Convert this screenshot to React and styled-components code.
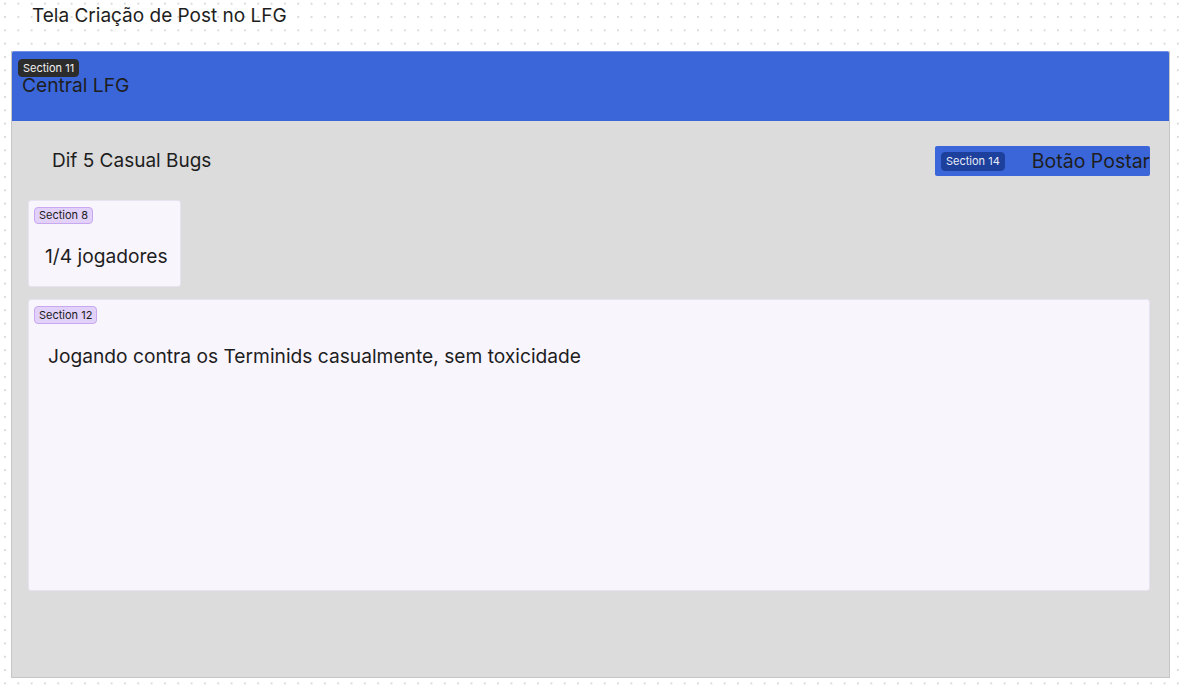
import styled, { createGlobalStyle } from 'styled-components'

const GlobalStyle = createGlobalStyle`
  body {
    margin: 0;
    font-family: Inter, "Noto Sans", sans-serif;
    background-color: #ffffff;
    background-image: radial-gradient(circle, #dadada 0.7px, transparent 1px);
    background-size: 13.33px 13.33px;
    background-position: -1.7px -3px;
  }
`

const Canvas = styled.div`
  width: 1189px;
  height: 695px;
  padding: 0 19px 0 11px;
  box-sizing: border-box;
  display: flex;
  flex-direction: column;
`

const PageTitle = styled.div`
  font-size: 19px;
  color: #1e1e1e;
  height: 32px;
  line-height: 32px;
  padding-left: 21px;
  margin-bottom: 19px;
`

const Frame = styled.div`
  height: 626px;
  background: #dcdcdc;
  border: 1px solid #c6c6c6;
  border-top: none;
  display: flex;
  flex-direction: column;
`

const Header = styled.div`
  position: relative;
  height: 70px;
  background: #3a66d9;
  border-top: 1px solid #6d8fe6;
  border-radius: 2px 2px 0 0;
  padding: 21px 10px 0;
  box-sizing: border-box;
  font-size: 19.2px;
  color: #1e1e1e;
`

const Badge = styled.span`
  display: inline-flex;
  align-items: center;
  height: ${(p) => p.$h || 17}px;
  padding: 0 4px;
  border-radius: 4px;
  font-size: 11px;
  line-height: 1;
  box-sizing: border-box;
  background: ${(p) => p.$bg};
  color: ${(p) => p.$fg};
  border: 1px solid ${(p) => p.$border || p.$bg};
`

const TopBadge = styled(Badge)`
  position: absolute;
  top: 7px;
  left: 6px;
`

const Body = styled.div`
  display: flex;
  flex-direction: column;
  padding: 25px 19px 0 16px;
`

const TopRow = styled.div`
  display: flex;
  align-items: center;
  justify-content: space-between;
  height: 30px;
`

const Subtitle = styled.div`
  font-size: 19px;
  color: #1e1e1e;
  padding-left: 24px;
  margin-top: -2px;
`

const PostButton = styled.div`
  width: 215px;
  height: 30px;
  background: #3a66d9;
  border-radius: 2px;
  display: flex;
  align-items: center;
  padding-left: 6px;
  box-sizing: border-box;
  overflow: hidden;
  white-space: nowrap;
`

const ButtonLabel = styled.span`
  font-size: 19.5px;
  color: #1e1e1e;
  margin-left: 27px;
`

const Card = styled.div`
  display: flex;
  flex-direction: column;
  align-items: flex-start;
  background: #f8f5fd;
  border: 1px solid #e8e3f0;
  border-radius: 3px;
  box-sizing: border-box;
  width: ${(p) => p.$w || 'auto'};
  height: ${(p) => p.$h}px;
  margin-top: ${(p) => p.$mt}px;
  padding: 6px 5px 0;
`

const CardText = styled.div`
  font-size: 19.2px;
  color: #1e1e1e;
  padding-left: ${(p) => p.$pl}px;
  margin-top: ${(p) => p.$mt}px;
`

const purple = { $bg: '#e2d2f9', $border: '#c8a8f1', $fg: '#1b1b1b' }

export default function App() {
  return (
    <>
      <GlobalStyle />
      <Canvas>
        <PageTitle>Tela Criação de Post no LFG</PageTitle>
        <Frame>
          <Header>
            <TopBadge $h={18} $bg="#2c2c2c" $fg="#f2f2f2">Section 11</TopBadge>
            Central LFG
          </Header>
          <Body>
            <TopRow>
              <Subtitle>Dif 5 Casual Bugs</Subtitle>
              <PostButton>
                <Badge $h={19} $bg="#1e409d" $fg="#e8ecf8">Section 14</Badge>
                <ButtonLabel>Botão Postar</ButtonLabel>
              </PostButton>
            </TopRow>
            <Card $w="153px" $h={87} $mt={24}>
              <Badge {...purple}>Section 8</Badge>
              <CardText $pl={11} $mt={20}>1/4 jogadores</CardText>
            </Card>
            <Card $h={292} $mt={12}>
              <Badge $h={18} {...purple}>Section 12</Badge>
              <CardText $pl={14} $mt={20}>Jogando contra os Terminids casualmente, sem toxicidade</CardText>
            </Card>
          </Body>
        </Frame>
      </Canvas>
    </>
  )
}
